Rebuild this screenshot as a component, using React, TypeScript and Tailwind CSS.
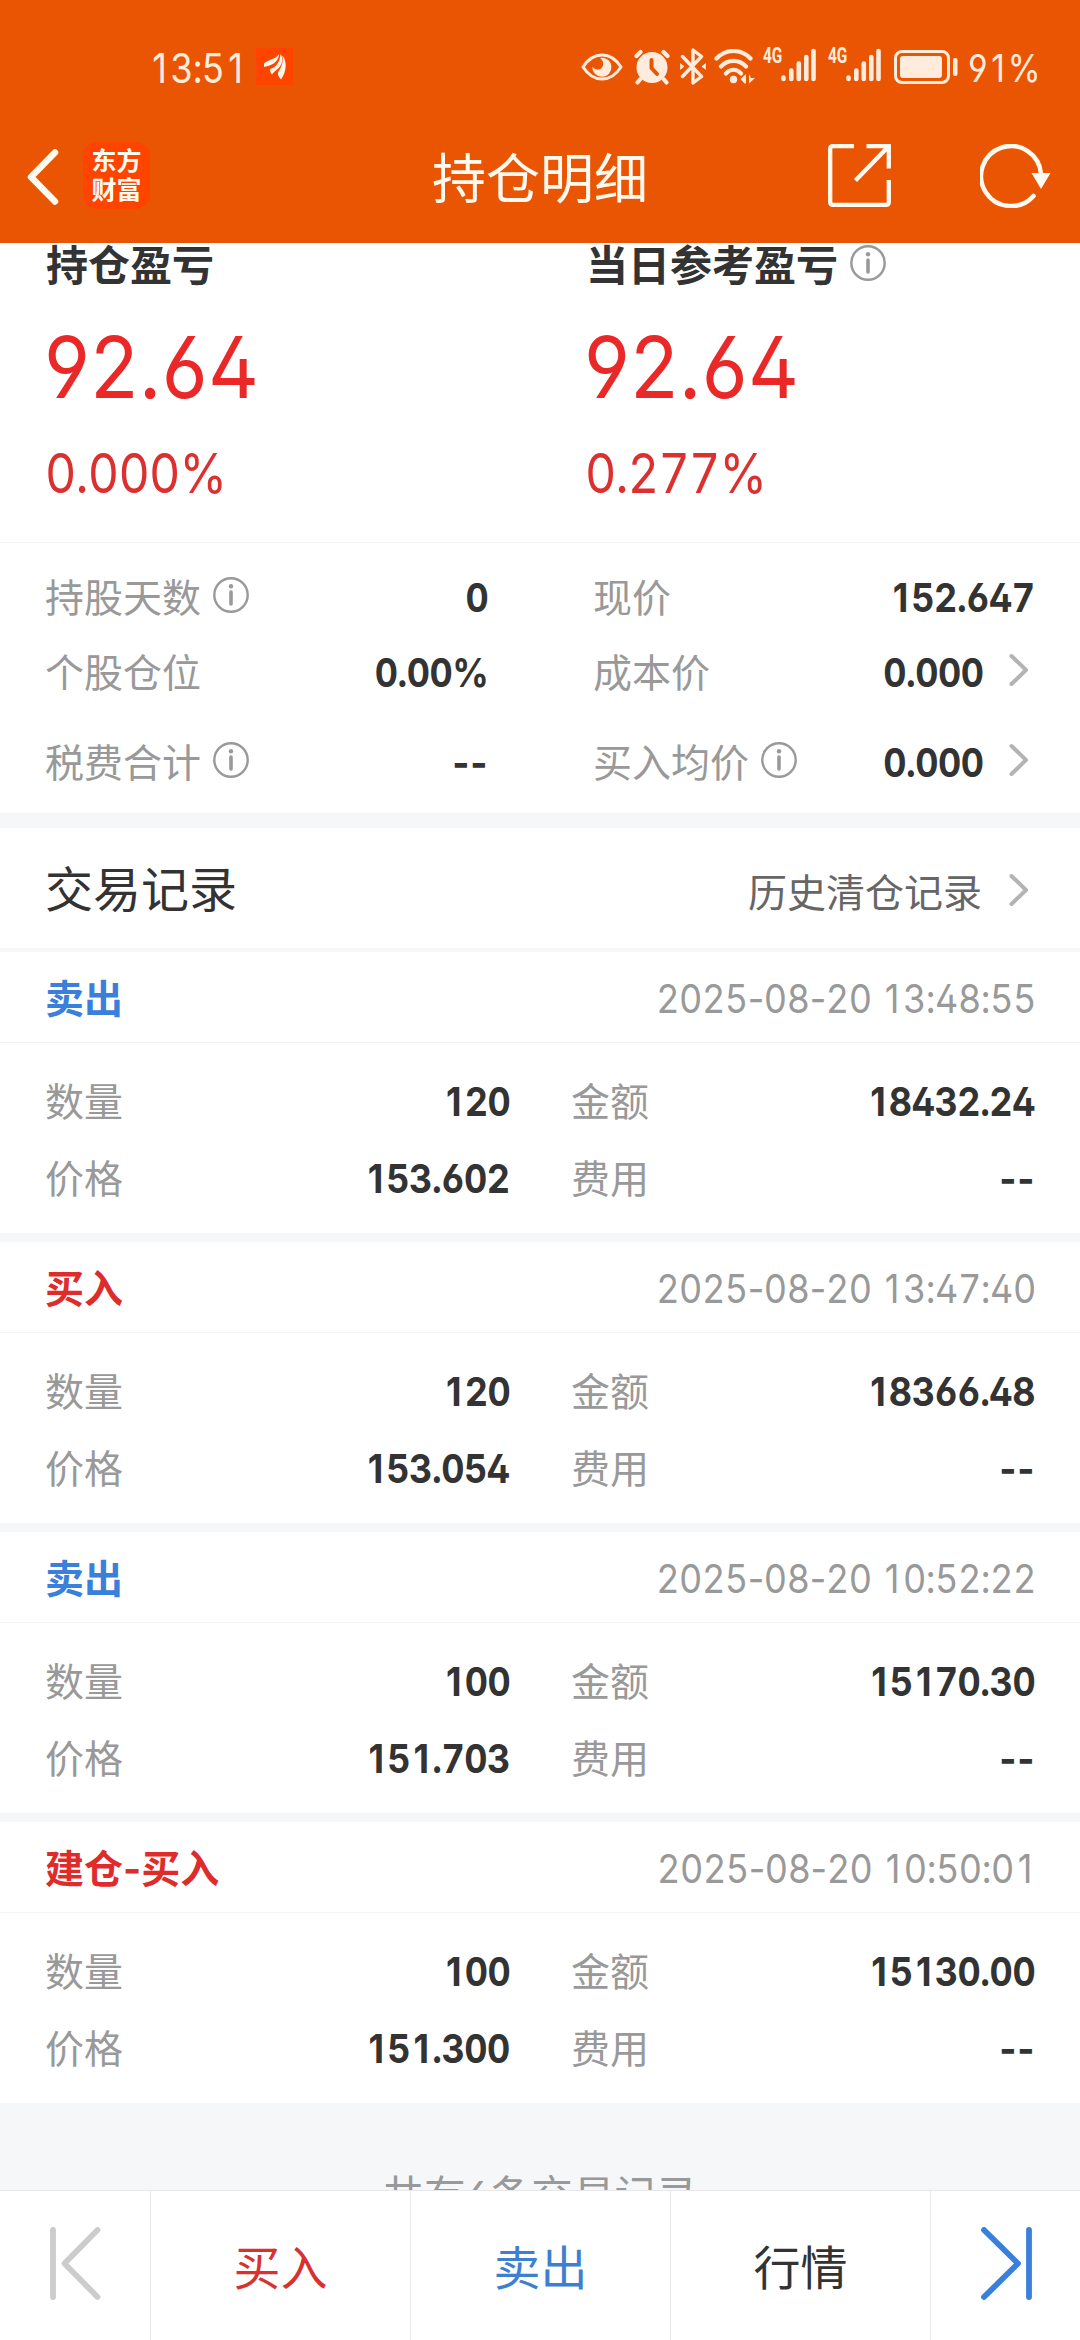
import type { ReactNode } from 'react';

const CREAM = '#FFECDD';

type RecordItem = {
  side: string;
  tone: 'buy' | 'sell';
  time: string;
  quantity: string;
  price: string;
  amount: string;
  fee: string;
};

const records: RecordItem[] = [
  { side: '卖出', tone: 'sell', time: '2025-08-20 13:48:55', quantity: '120', price: '153.602', amount: '18432.24', fee: '--' },
  { side: '买入', tone: 'buy', time: '2025-08-20 13:47:40', quantity: '120', price: '153.054', amount: '18366.48', fee: '--' },
  { side: '卖出', tone: 'sell', time: '2025-08-20 10:52:22', quantity: '100', price: '151.703', amount: '15170.30', fee: '--' },
  { side: '建仓-买入', tone: 'buy', time: '2025-08-20 10:50:01', quantity: '100', price: '151.300', amount: '15130.00', fee: '--' },
];

/* Tabular figures, with a footless "1" centred in a digit-wide cell and a natural-width hyphen. */
function Digits({ value }: { value: string }) {
  return (
    <span className="whitespace-pre [font-feature-settings:'cv02','cv03','cv04','tnum']">
      {value.split(/([-1])/).map((part, i) => {
        if (part === '1') {
          return (
            <span key={i} className="inline-block w-[0.615em] text-center [font-feature-settings:normal]">1</span>
          );
        }
        if (part === '-') {
          return (
            <span key={i} className="[font-feature-settings:normal]">-</span>
          );
        }
        return part;
      })}
    </span>
  );
}

function InfoIcon({ className = '' }: { className?: string }) {
  return (
    <svg className={`h-9 w-9 shrink-0 ${className}`} viewBox="0 0 36 36" fill="none" stroke="#999">
      <circle cx="18" cy="18" r="16.7" strokeWidth="2.4" />
      <circle cx="18" cy="9.3" r="2.2" fill="#999" stroke="none" />
      <path d="M18 15v12" strokeWidth="3.6" strokeLinecap="round" />
    </svg>
  );
}

function Chevron() {
  return (
    <svg className="mr-[6px] mb-[5px] ml-[25px] h-[34px] w-5 shrink-0" viewBox="0 0 20 34" fill="none" stroke="#b3b3b3" strokeWidth="4" strokeLinecap="round" strokeLinejoin="round">
      <path d="M2.5 3L17 17L2.5 31" />
    </svg>
  );
}

function SignalIcon() {
  return (
    <div className="flex h-[34px] w-[53px]">
      <span className="h-4 w-[18px] origin-left scale-x-70 font-[Roboto] text-[22px] leading-4 font-bold whitespace-nowrap">4G</span>
      <svg className="h-[34px] w-[35px]" viewBox="0 0 35 34" stroke={CREAM} strokeWidth="4.6" strokeLinecap="round">
        <path d="M2.5 29.5v1.5M10.3 22.5V31M17.8 15.5V31M25.3 9V31M32.5 3V31" />
      </svg>
    </div>
  );
}

function StatusBar() {
  return (
    <div className="flex h-[110px] items-start pt-[48px] pl-[148px] text-[#FFECDD]">
      <span className="w-[108px] origin-left scale-x-88 text-[41px] leading-[41px] tracking-[-1px] whitespace-nowrap">
        <Digits value="13:51" />
      </span>
      <svg className="h-[37px] w-[37px]" viewBox="0 0 37 37">
        <rect width="37" height="37" fill="#FF4400" />
        <g fill="#FFF8E8">
          <path d="M8 15.5C13 11 19 12 23 6C23 12 18 16.500 12 18C10.500 18.300 9 18.700 8 19Z" />
          <path d="M14 21C20 19.500 24 14 24.500 6C28 11 26 18 21 21.500C19 23 17.500 24.500 16 26.500C14.500 25 14 23 14 21Z" />
          <path d="M26.500 7.500C31 13 31 23 25 31.500C23 29 21.500 27 22 25C22.500 22 28 18 26.500 7.500Z" />
        </g>
      </svg>
      <svg className="mt-[5px] ml-[288px] h-7 w-[42px]" viewBox="0 0 42 28" fill="none" stroke={CREAM} strokeWidth="3">
        <path d="M2 14C6.500 7 13 2 21 2S35.500 7 40 14C35.500 21 29 26 21 26S6.500 21 2 14Z" strokeLinejoin="round" />
        <path d="M19 5A9.500 9.500 0 1 1 11.500 13.500C13 17 18 17.500 20.500 15C23.500 12 22.500 7.500 19 5Z" fill={CREAM} stroke="none" />
      </svg>
      <svg className="mt-px ml-[11px] h-9 w-9" viewBox="0 0 36 36">
        <g stroke={CREAM} strokeWidth="4.200" strokeLinecap="round">
          <path d="M2.500 7L6.500 3M29.500 3L33.500 7M6 30.500L3.500 33.500M30 30.500L32.500 33.500" />
        </g>
        <circle cx="18" cy="18.500" r="15.500" fill={CREAM} />
        <path d="M17.500 11V19L23 25" fill="none" stroke="#EA5504" strokeWidth="4" strokeLinecap="round" strokeLinejoin="round" />
      </svg>
      <svg className="ml-[10px] h-[37px] w-[26px]" viewBox="0 0 26 37" fill="none" stroke={CREAM} strokeWidth="3.400" strokeLinecap="round" strokeLinejoin="round">
        <path d="M2.500 8.500L21.500 28.500L13 35V2L21.500 8.500L2.500 28.500" />
        <path d="M0.500 16L4 18.500L0.500 21ZM25.500 16L22 18.500L25.500 21Z" fill={CREAM} strokeWidth="1" />
      </svg>
      <svg className="mt-px ml-[8px] h-[35px] w-[42px]" viewBox="0 0 42 35" fill="none" stroke={CREAM} strokeWidth="4.200" strokeLinecap="round">
        <path d="M2.500 9.500C12 -0.500 27 -0.500 36.500 9.500M7 17.500C14 10 25 10 32 17.500M12 24.500C16 19.500 23 19.500 27 24.500" />
        <circle cx="19.500" cy="30.500" r="3.700" fill={CREAM} stroke="none" />
        <path d="M26.500 30L32 25V34.500H30.500ZM35 25V34.500L41 29H37Z" fill={CREAM} stroke="none" />
      </svg>
      <div className="ml-[7px] flex gap-3">
        <SignalIcon />
        <SignalIcon />
      </div>
      <svg className="mt-[2px] ml-[13px] h-[34px] w-[64px]" viewBox="0 0 64 34" fill="none">
        <rect x="1.500" y="1.500" width="53" height="31" rx="6.500" stroke={CREAM} strokeWidth="3" />
        <rect x="6" y="6" width="42" height="22" rx="3" fill={CREAM} />
        <rect x="59" y="8" width="4.500" height="18" rx="2" fill={CREAM} />
      </svg>
      <span className="ml-[9px] origin-left scale-x-88 text-[38px] leading-[41px] tracking-[-1.800px]">
        <Digits value="91%" />
      </span>
    </div>
  );
}

function NavBar() {
  return (
    <div className="flex h-[133px] items-center text-[#FFFAF0]">
      <svg className="ml-[27px] h-[56px] w-8" viewBox="0 0 32 56" fill="none" stroke="currentColor" strokeWidth="6.500" strokeLinecap="round" strokeLinejoin="round">
        <path d="M28 3.500L4 28L28 52.500" />
      </svg>
      <div className="mb-[3px] ml-6 flex h-[67px] w-[67px] flex-col items-center justify-center rounded-[14px] bg-[#FF4400] pb-[3px] font-['Noto_Sans_CJK_SC'] text-[25px] leading-[29px] font-bold">
        <span>东方</span>
        <span>财富</span>
      </div>
      <h1 className="mt-[7px] ml-[282px] w-[216px] text-[54px] leading-[60px] whitespace-nowrap">持仓明细</h1>
      <svg className="mb-[2px] ml-[180px] h-[63px] w-[63px]" viewBox="0 0 63 63" fill="none" stroke="currentColor" strokeWidth="4.300">
        <path d="M26 2.200H5Q2.200 2.200 2.200 5V58Q2.200 60.800 5 60.800H58Q60.800 60.800 60.800 58V36M38.500 2.200H60.800V24.500M60 3L27.500 36.500" />
      </svg>
      <svg className="mb-[2px] ml-[89px] h-[64px] w-[72px]" viewBox="0 0 72 64" fill="none" stroke="currentColor" strokeWidth="4.500" strokeLinecap="round">
        <path d="M53.500 52A30 30 0 1 1 61 30" />
        <path d="M51.500 29H70.500L61 45Z" fill="currentColor" stroke="none" />
      </svg>
    </div>
  );
}

function ProfitBlock({ title, value, percent, info }: { title: string; value: string; percent: string; info?: boolean }) {
  return (
    <div className="w-[540px] pt-[2px] pl-[46px]">
      <div className="flex h-[42px] items-center text-[42px] leading-[42px] font-bold">
        <span>{title}</span>
        {info && <InfoIcon className="mb-[7px] ml-[12px]" />}
      </div>
      <div className="mt-[37px] -ml-0.5 origin-left scale-x-93 text-[85px] leading-[88px] tracking-[0.300px] text-[#EA2828]">{value}</div>
      <div className="mt-[23px] -ml-px origin-left scale-x-88 text-[55px] leading-[76px] tracking-[-0.900px] text-[#DC3030] [font-feature-settings:'cv02','cv03','cv04','tnum']">{percent}</div>
    </div>
  );
}

function Figure({ children }: { children: string }) {
  if (children === '--') {
    return <span className="origin-right scale-x-92 text-[40px] font-bold tracking-[1px]">--</span>;
  }
  return (
    <span className="origin-right scale-x-90 text-[40px] font-bold tracking-[-0.500px]">
      <Digits value={children} />
    </span>
  );
}

function Metric({ label, value, info, link }: { label: string; value: string; info?: boolean; link?: boolean }) {
  return (
    <div className="flex h-[75px] items-center justify-between">
      <div className="flex items-center text-[#999]">
        <span className="text-[39px]">{label}</span>
        {info && <InfoIcon className="mb-[5px] ml-[12px]" />}
      </div>
      <div className="flex items-center">
        <Figure>{value}</Figure>
        {link && <Chevron />}
      </div>
    </div>
  );
}

function Field({ label, value }: { label: string; value: string }) {
  return (
    <div className="flex h-[77px] items-center justify-between">
      <span className="text-[39px] text-[#999]">{label}</span>
      <Figure>{value}</Figure>
    </div>
  );
}

function RecordCard({ record }: { record: RecordItem }) {
  return (
    <article className="h-[281px] bg-white">
      <header className="flex h-[91px] items-center justify-between border-b border-[#f4f4f4] pt-[3px] pr-[44px] pl-[45px]">
        <span className={record.tone === 'buy' ? 'text-[39px] font-bold text-[#DE2C2C]' : 'text-[39px] font-bold text-[#3A80DA]'}>{record.side}</span>
        <time className="origin-right scale-x-90 text-[40px] tracking-[-0.500px] text-[#999]">
          <Digits value={record.time} />
        </time>
      </header>
      <div className="flex justify-between pt-[20px] pr-[45px] pl-[45px]">
        <div className="w-[465px]">
          <Field label="数量" value={record.quantity} />
          <Field label="价格" value={record.price} />
        </div>
        <div className="w-[464px]">
          <Field label="金额" value={record.amount} />
          <Field label="费用" value={record.fee} />
        </div>
      </div>
    </article>
  );
}

function Tab({ children, className }: { children: ReactNode; className: string }) {
  return <button className={`flex h-full w-[260px] items-center justify-center border-l border-[#ebebeb] pt-[3px] text-[47px] ${className}`}>{children}</button>;
}

export default function App() {
  return (
    <div className="flex h-[2340px] w-[1080px] flex-col overflow-hidden bg-white font-[Inter,'Noto_Sans_CJK_SC',sans-serif] leading-none text-[#333] [font-feature-settings:'cv02','cv03','cv04']">
      <div className="h-[243px] shrink-0 bg-[#EA5504]">
        <StatusBar />
        <NavBar />
      </div>

      <main className="flex h-[1947px] shrink-0 flex-col overflow-hidden bg-[#f6f7f9]">
        <section className="flex h-[300px] shrink-0 border-b border-[#f4f4f4] bg-white">
          <ProfitBlock title="持仓盈亏" value="92.64" percent="0.000%" />
          <ProfitBlock title="当日参考盈亏" value="92.64" percent="0.277%" info />
        </section>

        <section className="flex h-[270px] shrink-0 justify-between bg-white pt-[17px] pr-[45px] pl-[45px]">
          <div className="w-[443px]">
            <Metric label="持股天数" value="0" info />
            <Metric label="个股仓位" value="0.00%" />
            <div className="mt-[15px]">
              <Metric label="税费合计" value="--" info />
            </div>
          </div>
          <div className="w-[442px]">
            <Metric label="现价" value="152.647" />
            <Metric label="成本价" value="0.000" link />
            <div className="mt-[15px]">
              <Metric label="买入均价" value="0.000" info link />
            </div>
          </div>
        </section>

        <section className="mt-[15px] flex h-[124px] shrink-0 items-center justify-between border-b-4 border-[#f7f7f7] bg-white pt-[4px] pr-[45px] pl-[45px]">
          <h2 className="text-[48px]">交易记录</h2>
          <div className="flex items-center pt-[4px] text-[39px] text-[#666]">
            <span className="mr-[2px]">历史清仓记录</span>
            <Chevron />
          </div>
        </section>

        <section className="flex shrink-0 flex-col gap-[9px]">
          {records.map((record) => (
            <RecordCard key={record.time} record={record} />
          ))}
        </section>

        <p className="mt-[73px] shrink-0 text-center text-[41.600px] leading-[41px] whitespace-nowrap text-[#999]">共有6条交易记录</p>
      </main>

      <nav className="flex h-[150px] shrink-0 border-t border-[#e8e8ea] bg-white">
        <div className="w-[150px] pt-[36px] pl-[50px]">
          <svg className="h-[73px] w-[51px]" viewBox="0 0 51 73" fill="none" stroke="#ccc" strokeWidth="5.800" strokeLinecap="round" strokeLinejoin="round">
            <path d="M3 3V70M47.500 3L14.500 36.500L47.500 70" />
          </svg>
        </div>
        <Tab className="text-[#D93030]">买入</Tab>
        <Tab className="text-[#3E80D0]">卖出</Tab>
        <Tab className="text-[#333]">行情</Tab>
        <div className="w-[150px] border-l border-[#ebebeb] pt-[36px] pl-[49px]">
          <svg className="h-[73px] w-[52px]" viewBox="0 0 52 73" fill="none" stroke="#3A80DA" strokeWidth="5.800" strokeLinecap="round" strokeLinejoin="round">
            <path d="M49 3V70M4 3L38 36.500L4 70" />
          </svg>
        </div>
      </nav>
    </div>
  );
}
